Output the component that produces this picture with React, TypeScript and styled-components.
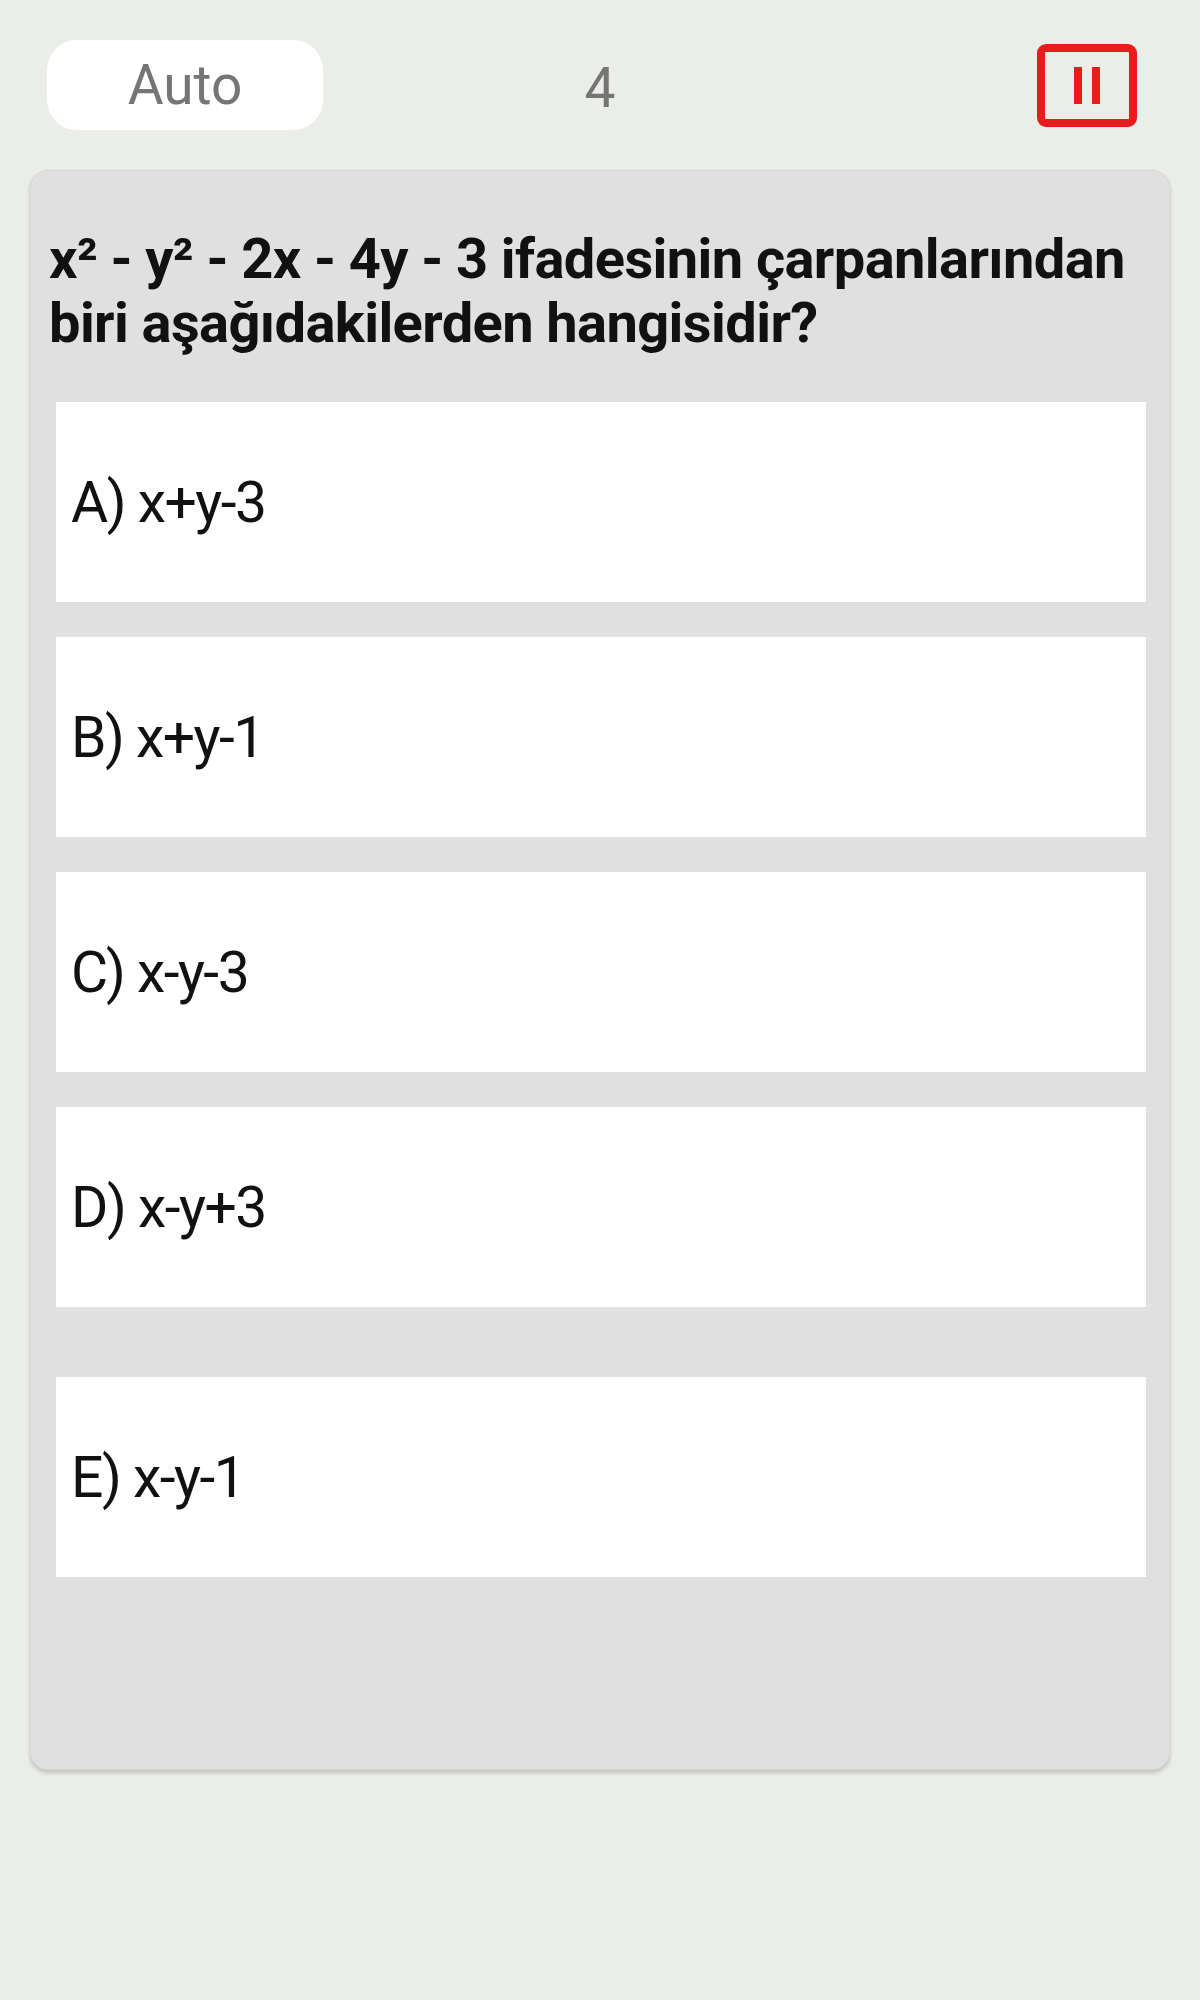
import React from "react";
import styled, { createGlobalStyle } from "styled-components";

const Global = createGlobalStyle`
  html, body {
    margin: 0;
    padding: 0;
    background: #ebede9;
    min-height: 2000px;
    font-family: Roboto, "Noto Sans", "Liberation Sans", sans-serif;
  }
`;

const Page = styled.div`
  width: 1200px;
  min-height: 2000px;
  background: #ebede9;
`;

const Header = styled.header`
  display: grid;
  grid-template-columns: 1fr auto 1fr;
  align-items: center;
  padding-top: 40px;
  height: 90px;
  margin-bottom: 40px;
`;

const LeftCell = styled.div`
  display: flex;
  justify-content: flex-start;
  padding-left: 47px;
`;

const RightCell = styled.div`
  display: flex;
  justify-content: flex-end;
  padding-right: 63px;
`;

const ModePill = styled.button`
  width: 276px;
  height: 90px;
  border: none;
  border-radius: 30px;
  background: #ffffff;
  color: #757575;
  font-family: Roboto, sans-serif;
  font-size: 55px;
  font-weight: 400;
  padding: 0;
  cursor: pointer;
`;

const Counter = styled.span`
  color: #757575;
  font-size: 55px;
  font-weight: 400;
  line-height: 1;
  padding-top: 6px;
`;

const PauseButton = styled.button`
  width: 100px;
  height: 83px;
  box-sizing: border-box;
  border: 8px solid #e91c1c;
  border-radius: 9px;
  background: transparent;
  display: flex;
  align-items: center;
  justify-content: center;
  gap: 10px;
  padding: 0;
  cursor: pointer;
`;

const PauseBar = styled.span`
  display: block;
  width: 8px;
  height: 37px;
  background: #e91c1c;
`;

const Card = styled.main`
  margin: 0 30px;
  box-sizing: border-box;
  height: 1600px;
  background: #e0e0e0;
  border-radius: 18px;
  border: 1px solid #d8d8d8;
  box-shadow: 0 3px 4px rgba(0, 0, 0, 0.18);
  padding: 56px 20px 0 18px;
`;

const Question = styled.h1`
  margin: 0 0 47px 0;
  font-family: Roboto, sans-serif;
  font-size: 56px;
  line-height: 64px;
  letter-spacing: -0.6px;
  font-weight: 700;
  color: #111111;
`;

const Options = styled.div`
  display: flex;
  flex-direction: column;
  gap: 35px;
  padding-left: 7px;
`;

const Option = styled.button<{ $extraGap?: boolean }>`
  display: flex;
  align-items: center;
  box-sizing: border-box;
  width: 1090px;
  height: 200px;
  margin-top: ${(p) => (p.$extraGap ? "35px" : "0")};
  padding: 0 0 0 15px;
  border: none;
  background: #ffffff;
  color: #111111;
  font-family: Roboto, sans-serif;
  font-size: 57px;
  letter-spacing: -1.5px;
  font-weight: 400;
  text-align: left;
  cursor: pointer;
`;

const options = [
  { key: "A", text: "x+y-3" },
  { key: "B", text: "x+y-1" },
  { key: "C", text: "x-y-3" },
  { key: "D", text: "x-y+3" },
  { key: "E", text: "x-y-1" },
];

export default function App() {
  return (
    <Page>
      <Global />
      <Header>
        <LeftCell>
          <ModePill>Auto</ModePill>
        </LeftCell>
        <Counter>4</Counter>
        <RightCell>
          <PauseButton aria-label="pause">
            <PauseBar />
            <PauseBar />
          </PauseButton>
        </RightCell>
      </Header>
      <Card>
        <Question>
          x² - y² - 2x - 4y - 3 ifadesinin çarpanlarından biri aşağıdakilerden hangisidir?
        </Question>
        <Options>
          {options.map((o) => (
            <Option key={o.key} $extraGap={o.key === "E"}>
              {o.key}) {o.text}
            </Option>
          ))}
        </Options>
      </Card>
    </Page>
  );
}
